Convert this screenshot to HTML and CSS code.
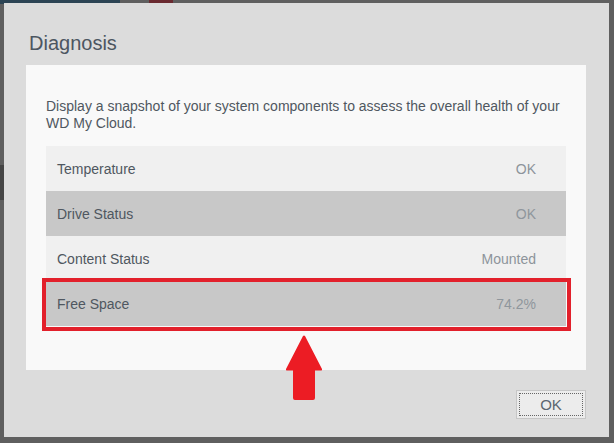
FILE: index.html
```html
<!DOCTYPE html>
<html>
<head>
<meta charset="utf-8">
<link rel="stylesheet" href="styles.css">
</head>
<body>
<div class="backdrop">
  <div class="dialog">
    <h1 class="title">Diagnosis</h1>
    <div class="panel">
      <p class="desc">Display a snapshot of your system components to assess the overall health of your WD My Cloud.</p>
      <div class="table">
        <div class="row light"><span class="label">Temperature</span><span class="value">OK</span></div>
        <div class="row dark"><span class="label">Drive Status</span><span class="value">OK</span></div>
        <div class="row light"><span class="label">Content Status</span><span class="value">Mounted</span></div>
        <div class="row dark highlighted"><span class="label">Free Space</span><span class="value">74.2%</span><span class="redbox"></span></div>
      </div>
    </div>
    <svg class="arrow" width="40" height="65" viewBox="0 0 40 65">
      <path d="M19 1 Q20 0 21 1 L38 34 Q38.5 35.5 37 35.5 L31 35.5 L31 63 Q31 65 29 65 L11 65 Q9 65 9 63 L9 35.5 L3 35.5 Q1.5 35.5 2 34 Z" fill="#ec1c24"/>
    </svg>
    <div class="footer">
      <button class="ok">OK</button>
    </div>
  </div>
</div>
</body>
</html>
```
FILE: styles.css
```css
html, body {
  margin: 0;
  padding: 0;
}
body {
  width: 614px;
  height: 443px;
  overflow: hidden;
  background:
    linear-gradient(#2c4454, #2c4454) 0 0 / 120px 4px no-repeat,
    linear-gradient(#6a2a30, #6a2a30) 149px 0 / 24px 4px no-repeat,
    linear-gradient(#454545, #454545) 0 165px / 4px 35px no-repeat,
    #5f5f5f;
  font-family: "Liberation Sans", Arial, sans-serif;
}
.backdrop {
  padding: 3px 5px 0 4px;
}
.dialog {
  position: relative;
  width: 605px;
  height: 434px;
  background: #dcdcdc;
  box-sizing: border-box;
  display: flex;
  flex-direction: column;
}
.title {
  margin: 0;
  padding: 28px 0 0 25px;
  height: 34px;
  font-size: 20px;
  font-weight: normal;
  line-height: 24px;
  color: #4c5661;
}
.panel {
  margin: 0 23px 0 22px;
  height: 305px;
  background: #f9f9f9;
  padding: 33px 20px 0 20px;
  box-sizing: border-box;
}
.desc {
  margin: 0 0 14px 0;
  font-size: 14px;
  line-height: 17px;
  color: #4f5760;
}
.table {
  display: flex;
  flex-direction: column;
}
.row {
  position: relative;
  height: 45px;
  display: flex;
  align-items: center;
  justify-content: space-between;
  padding: 0 30px 0 11px;
  font-size: 14px;
}
.row.light { background: #f0f0f0; }
.row.dark { background: #c8c8c8; }
.label { color: #4f5760; }
.value { color: #8d949b; }
.row.dark .value { color: #8f969c; }
.redbox {
  position: absolute;
  left: -4px;
  right: -5px;
  top: -3px;
  bottom: -5px;
  border: 4px solid #e2202b;
}
.arrow {
  position: absolute;
  left: 280px;
  top: 332px;
}
.footer {
  display: flex;
  justify-content: flex-end;
  padding: 20px 23px 0 0;
}
.ok {
  width: 70px;
  height: 29px;
  margin: 0;
  padding: 0;
  background: #ececec;
  border: 1px solid #c6c6c6;
  outline: 1px dotted #666;
  outline-offset: -4px;
  font-family: "Liberation Sans", Arial, sans-serif;
  font-size: 15px;
  color: #5b6670;
}
```
